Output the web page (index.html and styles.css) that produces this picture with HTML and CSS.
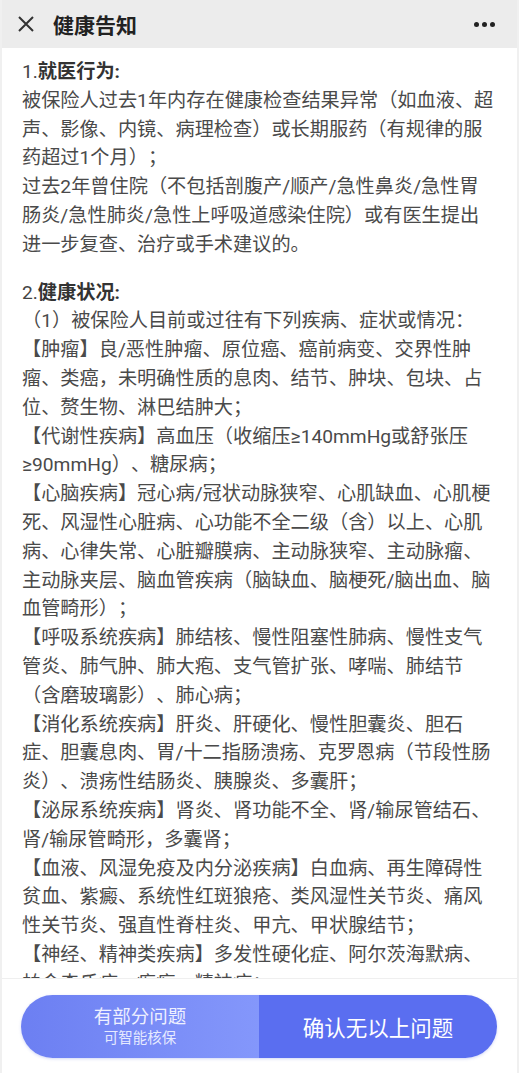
FILE: index.html
```html
<!DOCTYPE html>
<html lang="zh">
<head>
<meta charset="utf-8">
<title>健康告知</title>
<link rel="stylesheet" href="styles.css">
</head>
<body>
<div class="page">
  <header class="topbar">
    <svg class="close" width="18" height="18" viewBox="0 0 18 18"><path d="M2 2 L16 16 M16 2 L2 16" stroke="#333" stroke-width="2" fill="none"/></svg>
    <div class="title">健康告知</div>
    <div class="more"><span></span><span></span><span></span></div>
  </header>
  <main class="content">
    <section class="block">
      <div class="heading"><span class="num">1.</span>就医行为:</div>
      <p class="txt">被保险人过去1年内存在健康检查结果异常（如血液、超<br>声、影像、内镜、病理检查）或长期服药（有规律的服<br>药超过1个月）；<br>过去2年曾住院（不包括剖腹产/顺产/急性鼻炎/急性胃<br>肠炎/急性肺炎/急性上呼吸道感染住院）或有医生提出<br>进一步复查、治疗或手术建议的。</p>
    </section>
    <section class="block">
      <div class="heading"><span class="num">2.</span>健康状况:</div>
      <p class="txt">（1）被保险人目前或过往有下列疾病、症状或情况：<br>【肿瘤】良/恶性肿瘤、原位癌、癌前病变、交界性肿<br>瘤、类癌，未明确性质的息肉、结节、肿块、包块、占<br>位、赘生物、淋巴结肿大；<br>【代谢性疾病】高血压（收缩压≥140mmHg或舒张压<br>≥90mmHg）、糖尿病；<br>【心脑疾病】冠心病/冠状动脉狭窄、心肌缺血、心肌梗<br>死、风湿性心脏病、心功能不全二级（含）以上、心肌<br>病、心律失常、心脏瓣膜病、主动脉狭窄、主动脉瘤、<br>主动脉夹层、脑血管疾病（脑缺血、脑梗死/脑出血、脑<br>血管畸形）；<br>【呼吸系统疾病】肺结核、慢性阻塞性肺病、慢性支气<br>管炎、肺气肿、肺大疱、支气管扩张、哮喘、肺结节<br>（含磨玻璃影）、肺心病；<br>【消化系统疾病】肝炎、肝硬化、慢性胆囊炎、胆石<br>症、胆囊息肉、胃/十二指肠溃疡、克罗恩病（节段性肠<br>炎）、溃疡性结肠炎、胰腺炎、多囊肝；<br>【泌尿系统疾病】肾炎、肾功能不全、肾/输尿管结石、<br>肾/输尿管畸形，多囊肾；<br>【血液、风湿免疫及内分泌疾病】白血病、再生障碍性<br>贫血、紫癜、系统性红斑狼疮、类风湿性关节炎、痛风<br>性关节炎、强直性脊柱炎、甲亢、甲状腺结节；<br>【神经、精神类疾病】多发性硬化症、阿尔茨海默病、<br>帕金森氏症、癫痫、精神病；</p>
    </section>
  </main>
  <footer class="bottombar">
    <div class="pill">
      <button class="btn-part"><span class="main">有部分问题</span><span class="sub">可智能核保</span></button>
      <button class="btn-ok">确认无以上问题</button>
    </div>
  </footer>
</div>
</body>
</html>
```

FILE: styles.css
```css
* { box-sizing: border-box; }
html, body { margin: 0; padding: 0; }
body {
  font-family: Roboto, "Noto Sans CJK SC", "Noto Sans", sans-serif;
  background: #fff;
  text-spacing-trim: space-all;
}
.page {
  position: relative;
  width: 519px;
  height: 1073px;
  overflow: hidden;
  background: #fff;
  border-left: 2px solid #f0f0f0;
  border-right: 2px solid #f0f0f0;
}
.topbar {
  height: 48px;
  background: #ececec;
  display: flex;
  align-items: center;
  padding: 0 22px 0 15px;
}
.close { flex: none; }
.title {
  margin-left: 18px;
  font-size: 21px;
  font-weight: 700;
  color: #222;
  flex: 1;
}
.more { display: flex; gap: 3px; align-items: center; }
.more span {
  width: 5px; height: 5px; border-radius: 50%; background: #222;
}
.content {
  padding: 10px 0 0 20px;
}
.block { margin-bottom: 19px; }
.heading {
  font-size: 19.2px;
  line-height: 28.8px;
  font-weight: 700;
  color: #333;
}
.heading .num { font-weight: 400; color: #444; }
.txt {
  margin: 0;
  font-size: 19.2px;
  line-height: 28.8px;
  color: #4a4a4a;
  white-space: nowrap;
}
.bottombar {
  position: absolute;
  left: 0; right: 0; bottom: 0;
  height: 95px;
  background: #fff;
  border-top: 1px solid #efefef;
  padding: 16px 20px 0 19px;
}
.pill {
  display: flex;
  height: 63px;
  border-radius: 32px;
  overflow: hidden;
  box-shadow: 0 1px 3px rgba(80, 100, 220, 0.25);
}
.pill button {
  border: 0;
  margin: 0;
  padding: 0;
  font-family: inherit;
  color: #fff;
  display: flex;
  flex-direction: column;
  align-items: center;
  justify-content: center;
}
.btn-part {
  width: 238px;
  background: linear-gradient(90deg, #6c7ff2 0%, #8497fb 100%);
}
.btn-part .main { font-size: 18.5px; line-height: 22px; color: #eef0ff; }
.btn-part .sub { font-size: 14.5px; line-height: 18px; margin-top: 2px; color: #e6eaff; }
.btn-ok {
  flex: 1;
  background: #5a6ef0;
  font-size: 21.5px;
}
```
